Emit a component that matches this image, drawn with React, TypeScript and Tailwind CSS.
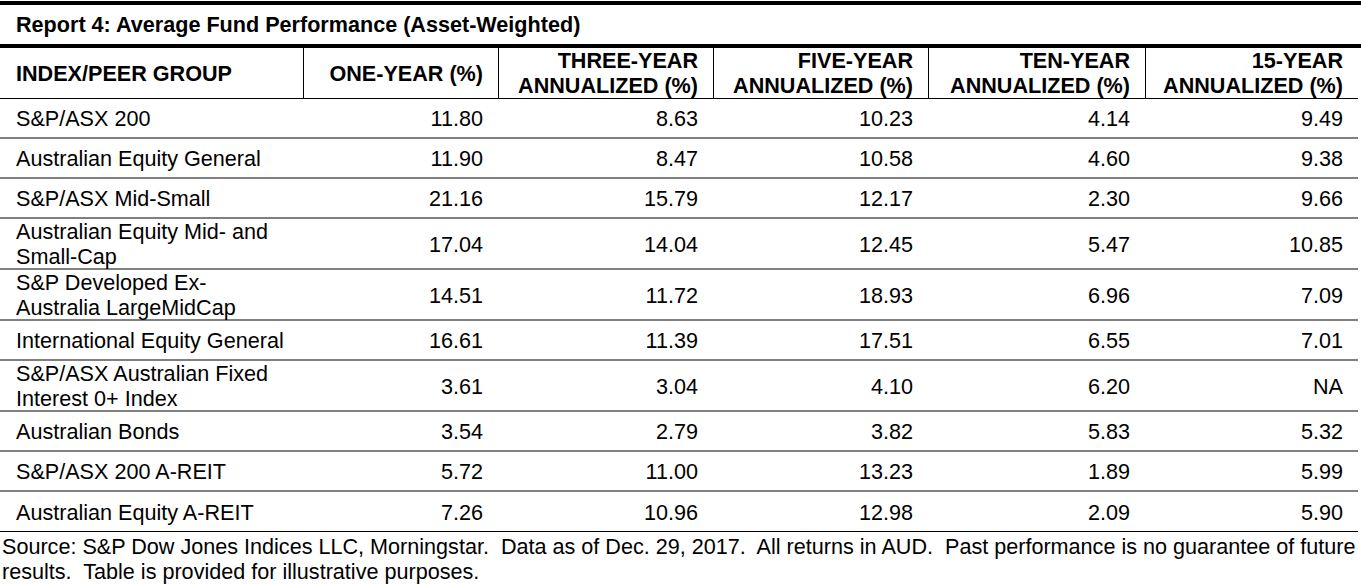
const columns = [
  { label: 'INDEX/PEER GROUP' },
  { label: 'ONE-YEAR (%)' },
  { label: ['THREE-YEAR', 'ANNUALIZED (%)'] },
  { label: ['FIVE-YEAR', 'ANNUALIZED (%)'] },
  { label: ['TEN-YEAR', 'ANNUALIZED (%)'] },
  { label: ['15-YEAR', 'ANNUALIZED (%)'] },
];

const rows: { name: string[]; values: string[] }[] = [
  { name: ['S&P/ASX 200'], values: ['11.80', '8.63', '10.23', '4.14', '9.49'] },
  { name: ['Australian Equity General'], values: ['11.90', '8.47', '10.58', '4.60', '9.38'] },
  { name: ['S&P/ASX Mid-Small'], values: ['21.16', '15.79', '12.17', '2.30', '9.66'] },
  { name: ['Australian Equity Mid- and', 'Small-Cap'], values: ['17.04', '14.04', '12.45', '5.47', '10.85'] },
  { name: ['S&P Developed Ex-', 'Australia LargeMidCap'], values: ['14.51', '11.72', '18.93', '6.96', '7.09'] },
  { name: ['International Equity General'], values: ['16.61', '11.39', '17.51', '6.55', '7.01'] },
  { name: ['S&P/ASX Australian Fixed', 'Interest 0+ Index'], values: ['3.61', '3.04', '4.10', '6.20', 'NA'] },
  { name: ['Australian Bonds'], values: ['3.54', '2.79', '3.82', '5.83', '5.32'] },
  { name: ['S&P/ASX 200 A-REIT'], values: ['5.72', '11.00', '13.23', '1.89', '5.99'] },
  { name: ['Australian Equity A-REIT'], values: ['7.26', '10.96', '12.98', '2.09', '5.90'] },
];

export default function App() {
  return (
    <div className="w-[1361px] h-[584px] bg-white text-black font-['Liberation_Sans',Arial,sans-serif] text-[21.6px] leading-[25px]">
      {/* title band */}
      <div className="mt-[1px] h-[47px] border-y-4 border-black flex items-center pl-4 font-bold">
        Report 4: Average Fund Performance (Asset-Weighted)
      </div>

      <div className="w-[1358px] grid grid-cols-[303px_195px_215px_215px_217px_1fr]">
        {columns.map((col, i) => (
          <div
            key={i}
            className={
              i === 0
                ? 'h-[51px] border-b border-black flex items-center pl-4 font-bold'
                : 'h-[51px] border-b border-l border-black flex flex-col justify-center items-end text-right pr-[15px] font-bold'
            }
          >
            {Array.isArray(col.label) ? col.label.map((l) => <span key={l}>{l}</span>) : col.label}
          </div>
        ))}

        {rows.map((row, r) => {
          const last = r === rows.length - 1;
          const tall = row.name.length > 1;
          const rowCls = `${tall ? 'h-[51px]' : 'h-[40px]'} ${last ? 'border-b border-black' : 'border-b-2 border-[#808080]'}`;
          return [
            <div key={`n${r}`} className={`${rowCls} flex flex-col justify-center pl-4 pt-[1px]`}>
              {row.name.map((n) => (
                <span key={n}>{n}</span>
              ))}
            </div>,
            ...row.values.map((v, c) => (
              <div key={`v${r}-${c}`} className={`${rowCls} flex items-center justify-end pr-[15px] pt-[1px]`}>
                {v}
              </div>
            )),
          ];
        })}
      </div>

      <div className="pl-[2px] pt-[2px] whitespace-pre">
        {'Source: S&P Dow Jones Indices LLC, Morningstar.  Data as of Dec. 29, 2017.  All returns in AUD.  Past performance is no guarantee of future'}
        <br />
        {'results.  Table is provided for illustrative purposes.'}
      </div>
    </div>
  );
}
